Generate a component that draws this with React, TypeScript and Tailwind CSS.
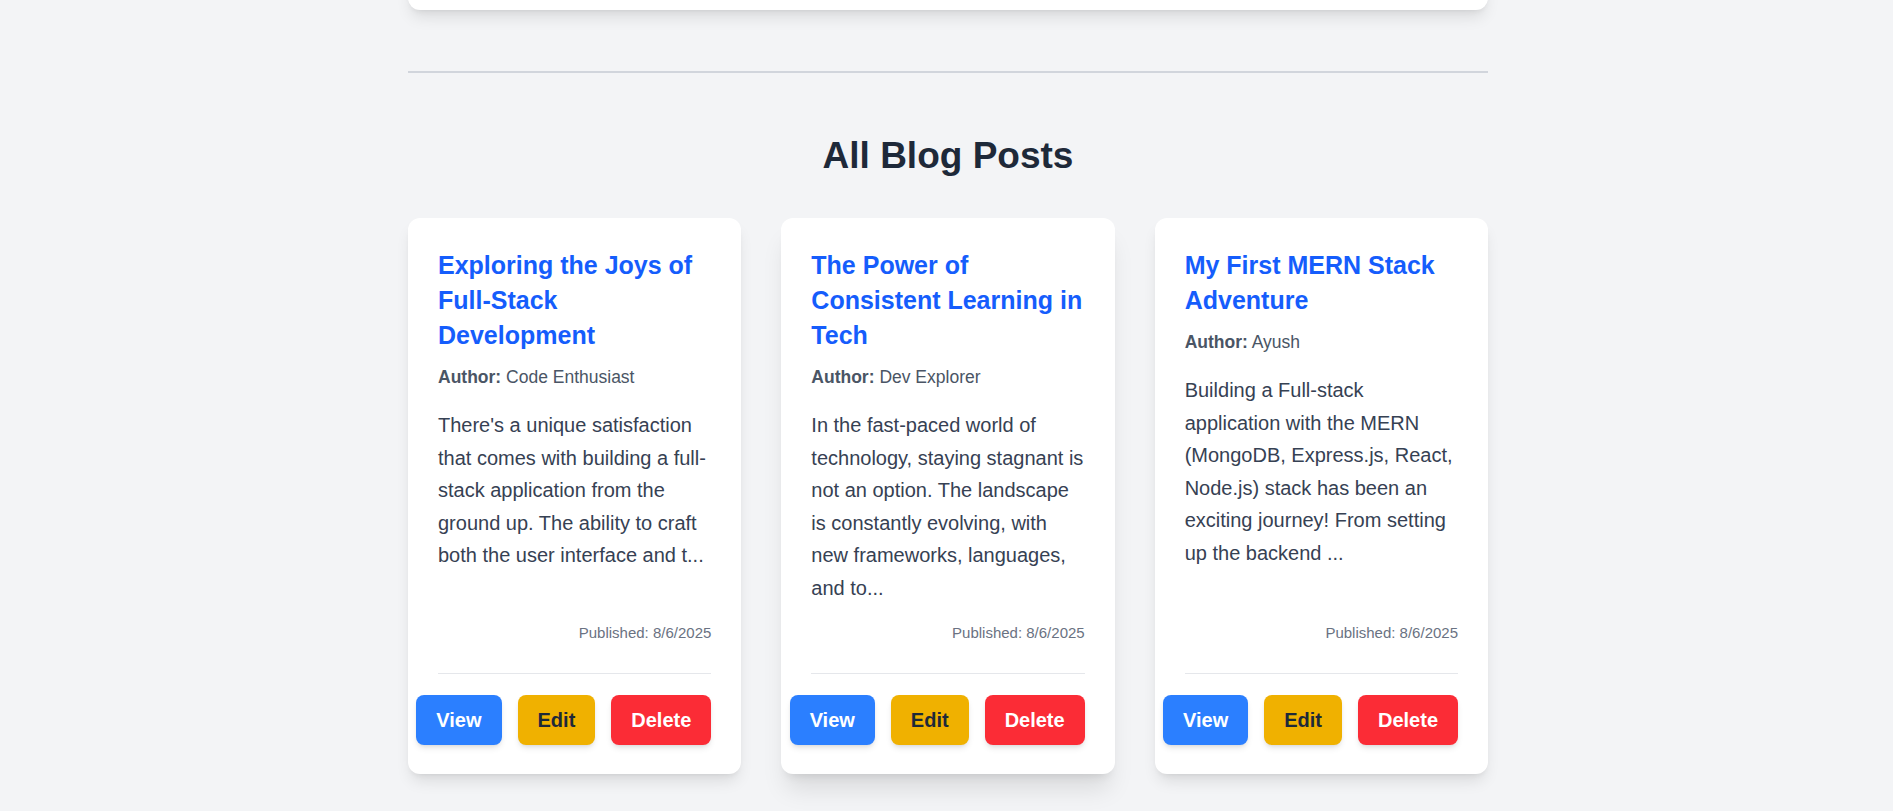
const posts = [
  {
    title: "Exploring the Joys of Full-Stack Development",
    author: "Code Enthusiast",
    excerpt:
      "There's a unique satisfaction that comes with building a full-stack application from the ground up. The ability to craft both the user interface and t...",
    date: "8/6/2025",
  },
  {
    title: "The Power of Consistent Learning in Tech",
    author: "Dev Explorer",
    excerpt:
      "In the fast-paced world of technology, staying stagnant is not an option. The landscape is constantly evolving, with new frameworks, languages, and to...",
    date: "8/6/2025",
  },
  {
    title: "My First MERN Stack Adventure",
    author: "Ayush",
    excerpt:
      "Building a Full-stack application with the MERN (MongoDB, Express.js, React, Node.js) stack has been an exciting journey! From setting up the backend ...",
    date: "8/6/2025",
  },
];

function PostCard({ post, hovered }: { post: (typeof posts)[number]; hovered?: boolean }) {
  return (
    <div
      className={
        "flex flex-col rounded-xl bg-white px-[30px] pt-[30px] pb-[29px] " +
        (hovered ? "shadow-xl" : "shadow-lg")
      }
    >
      <h3 className="text-[25px] font-bold leading-[35px] text-blue-600">{post.title}</h3>
      <p className="mt-3 text-[17.5px] leading-6 text-gray-600">
        <span className="font-bold">Author:</span> {post.author}
      </p>
      <p className="mt-5 flex-1 text-[20px] leading-[32.6px] text-gray-700">{post.excerpt}</p>
      <p className="mt-[17px] text-right text-[15px] leading-[22px] text-gray-500">
        Published: {post.date}
      </p>

      {/* actions */}
      <div className="mt-[29px] flex justify-end gap-4 border-t border-gray-200 pt-[21px]">
        <button className="h-[50px] shrink-0 rounded-lg bg-blue-500 px-5 text-[20px] font-bold text-white shadow-md">
          View
        </button>
        <button className="h-[50px] shrink-0 rounded-lg bg-yellow-500 px-5 text-[20px] font-bold text-gray-800 shadow-md">
          Edit
        </button>
        <button className="h-[50px] shrink-0 rounded-lg bg-red-500 px-5 text-[20px] font-bold text-white shadow-md">
          Delete
        </button>
      </div>
    </div>
  );
}

export default function App() {
  return (
    <div
      className="min-h-screen overflow-hidden bg-gray-100 pb-10"
      style={{ fontFamily: '"Liberation Sans", Arial, sans-serif' }}
    >
      <div className="mx-auto w-[1083px] pl-[3px]">
        {/* form card above, mostly scrolled away */}
        <div className="-mt-[200px] h-[210px] rounded-xl bg-white shadow-lg" />

        <hr className="mt-[61px] border-t-2 border-gray-300" />

        <h2 className="mt-[61px] text-center text-[37px] font-bold leading-[44px] text-gray-800">
          All Blog Posts
        </h2>

        <div className="mt-10 grid grid-cols-3 gap-10">
          {posts.map((p, i) => (
            <PostCard key={p.title} post={p} hovered={i === 1} />
          ))}
        </div>
      </div>
    </div>
  );
}
